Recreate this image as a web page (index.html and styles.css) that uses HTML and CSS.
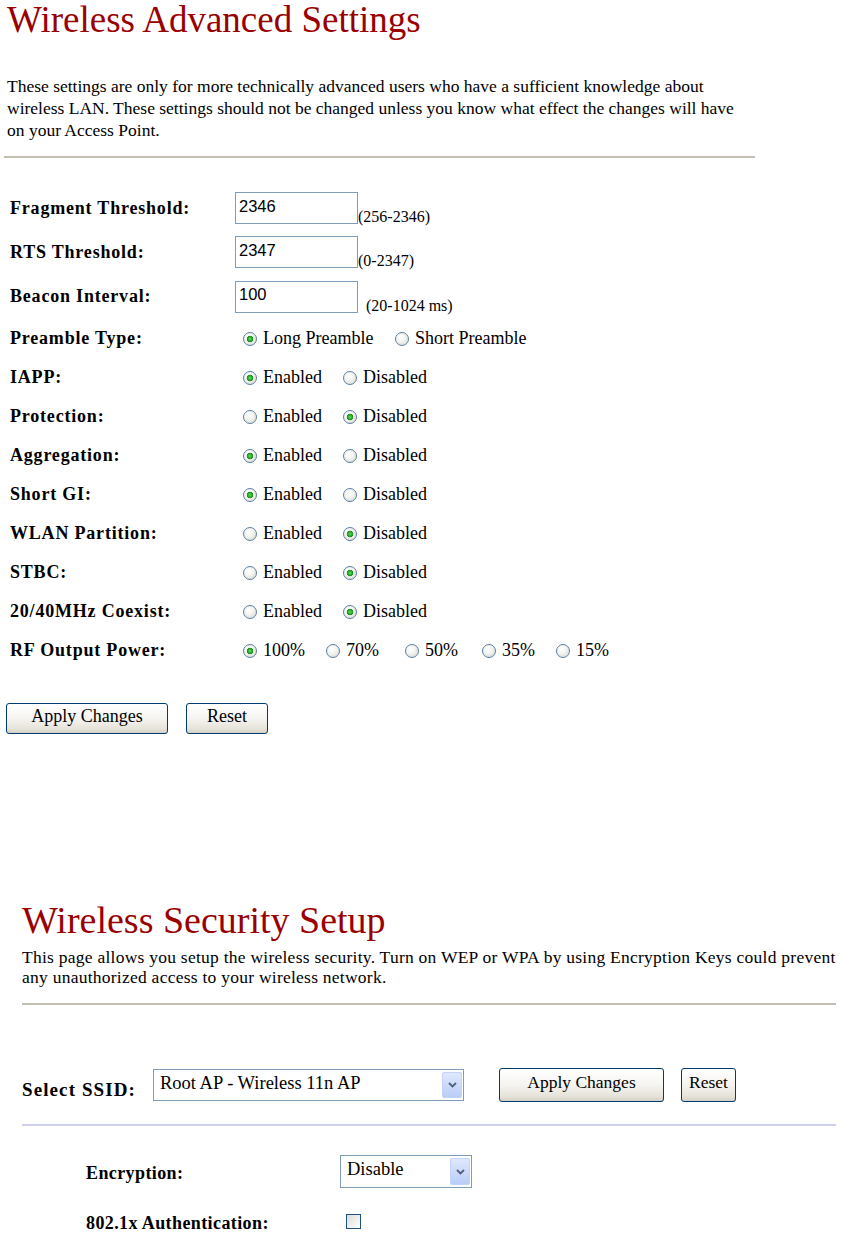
FILE: index.html
```html
<!DOCTYPE html>
<html>
<head>
<meta charset="utf-8">
<link rel="stylesheet" href="styles.css">
</head>
<body>
<div class="page">
  <section class="adv">
    <h1 class="title">Wireless Advanced Settings</h1>
    <p class="desc">These settings are only for more technically advanced users who have a sufficient knowledge about<br>wireless LAN. These settings should not be changed unless you know what effect the changes will have<br>on your Access Point.</p>
    <hr class="rule rule-adv">
    <div class="form">
      <div class="row row-tall">
        <div class="label">Fragment Threshold:</div>
        <div class="field"><input class="textbox" type="text" value="2346"><span class="hint">(256-2346)</span></div>
      </div>
      <div class="row row-tall">
        <div class="label">RTS Threshold:</div>
        <div class="field"><input class="textbox" type="text" value="2347"><span class="hint">(0-2347)</span></div>
      </div>
      <div class="row row-tall row-tall3">
        <div class="label">Beacon Interval:</div>
        <div class="field"><input class="textbox" type="text" value="100"><span class="hint hint-gap">(20-1024 ms)</span></div>
      </div>
      <div class="row">
        <div class="label">Preamble Type:</div>
        <div class="field">
          <label class="opt opt-long"><input class="radio" type="radio" name="pre" checked><span>Long Preamble</span></label>
          <label class="opt"><input class="radio" type="radio" name="pre"><span>Short Preamble</span></label>
        </div>
      </div>
      <div class="row">
        <div class="label">IAPP:</div>
        <div class="field">
          <label class="opt opt-en"><input class="radio" type="radio" name="iapp" checked><span>Enabled</span></label>
          <label class="opt"><input class="radio" type="radio" name="iapp"><span>Disabled</span></label>
        </div>
      </div>
      <div class="row">
        <div class="label">Protection:</div>
        <div class="field">
          <label class="opt opt-en"><input class="radio" type="radio" name="prot"><span>Enabled</span></label>
          <label class="opt"><input class="radio" type="radio" name="prot" checked><span>Disabled</span></label>
        </div>
      </div>
      <div class="row">
        <div class="label">Aggregation:</div>
        <div class="field">
          <label class="opt opt-en"><input class="radio" type="radio" name="agg" checked><span>Enabled</span></label>
          <label class="opt"><input class="radio" type="radio" name="agg"><span>Disabled</span></label>
        </div>
      </div>
      <div class="row">
        <div class="label">Short GI:</div>
        <div class="field">
          <label class="opt opt-en"><input class="radio" type="radio" name="sgi" checked><span>Enabled</span></label>
          <label class="opt"><input class="radio" type="radio" name="sgi"><span>Disabled</span></label>
        </div>
      </div>
      <div class="row">
        <div class="label">WLAN Partition:</div>
        <div class="field">
          <label class="opt opt-en"><input class="radio" type="radio" name="wp"><span>Enabled</span></label>
          <label class="opt"><input class="radio" type="radio" name="wp" checked><span>Disabled</span></label>
        </div>
      </div>
      <div class="row">
        <div class="label">STBC:</div>
        <div class="field">
          <label class="opt opt-en"><input class="radio" type="radio" name="stbc"><span>Enabled</span></label>
          <label class="opt"><input class="radio" type="radio" name="stbc" checked><span>Disabled</span></label>
        </div>
      </div>
      <div class="row">
        <div class="label">20/40MHz Coexist:</div>
        <div class="field">
          <label class="opt opt-en"><input class="radio" type="radio" name="co"><span>Enabled</span></label>
          <label class="opt"><input class="radio" type="radio" name="co" checked><span>Disabled</span></label>
        </div>
      </div>
      <div class="row">
        <div class="label">RF Output Power:</div>
        <div class="field">
          <label class="opt opt-pw1"><input class="radio" type="radio" name="rf" checked><span>100%</span></label>
          <label class="opt opt-pw2"><input class="radio" type="radio" name="rf"><span>70%</span></label>
          <label class="opt opt-pw3"><input class="radio" type="radio" name="rf"><span>50%</span></label>
          <label class="opt opt-pw4"><input class="radio" type="radio" name="rf"><span>35%</span></label>
          <label class="opt"><input class="radio" type="radio" name="rf"><span>15%</span></label>
        </div>
      </div>
    </div>
    <div class="actions">
      <button class="btn btn-apply" type="button">Apply Changes</button>
      <button class="btn btn-reset" type="button">Reset</button>
    </div>
  </section>

  <section class="sec">
    <h1 class="title title-sec">Wireless Security Setup</h1>
    <p class="desc desc-sec">This page allows you setup the wireless security. Turn on WEP or WPA by using Encryption Keys could prevent<br>any unauthorized access to your wireless network.</p>
    <hr class="rule rule-sec">
    <div class="ssid-row">
      <span class="label label-ssid">Select SSID:</span>
      <div class="select select-ssid"><span class="select-text">Root AP - Wireless 11n AP</span><span class="select-arrow"><svg width="9" height="6" viewBox="0 0 9 6"><path d="M1 1 L4.5 4.5 L8 1" fill="none" stroke="#4d6185" stroke-width="1.8"/></svg></span></div>
      <button class="btn btn-apply2" type="button">Apply Changes</button>
      <button class="btn btn-reset2" type="button">Reset</button>
    </div>
    <hr class="rule rule-blue">
    <div class="enc">
      <div class="enc-row">
        <span class="label label-enc">Encryption:</span>
        <div class="select select-enc"><span class="select-text">Disable</span><span class="select-arrow"><svg width="9" height="6" viewBox="0 0 9 6"><path d="M1 1 L4.5 4.5 L8 1" fill="none" stroke="#4d6185" stroke-width="1.8"/></svg></span></div>
      </div>
      <div class="enc-row enc-row2">
        <span class="label label-enc">802.1x Authentication:</span>
        <input class="check" type="checkbox">
      </div>
    </div>
  </section>
</div>
</body>
</html>
```
FILE: styles.css
```css
html, body {
  margin: 0;
  padding: 0;
  background: #ffffff;
}
body {
  font-family: "Liberation Serif", "Times New Roman", serif;
  color: #000000;
  width: 844px;
  height: 1243px;
  overflow: hidden;
}
.page {
  display: flex;
  flex-direction: column;
}
.adv {
  padding-left: 7px;
}
.title {
  margin: 2px 0 0 0;
  font-family: "Liberation Serif", serif;
  font-weight: normal;
  font-size: 37px;
  line-height: 36px;
  color: #990000;
}
.desc {
  margin: 37px 0 0 0;
  font-size: 17.5px;
  line-height: 22px;
}
.rule {
  border: 0;
  margin: 0;
  height: 2px;
  background: #c3c0b3;
}
.rule-adv {
  margin-top: 15px;
  margin-left: -3px;
  width: 751px;
}
.form {
  margin-top: 28px;
  display: flex;
  flex-direction: column;
  padding-left: 3px;
}
.row {
  display: flex;
  align-items: center;
  height: 39px;
}
.row-tall {
  height: 44px;
}
.row-tall3 {
  height: 45px;
}
.label {
  width: 225px;
  flex: none;
  font-weight: bold;
  font-size: 18px;
  letter-spacing: 0.8px;
}
.field {
  display: flex;
  align-items: center;
}
.textbox {
  box-sizing: border-box;
  width: 123px;
  height: 32px;
  border: 1px solid #7f9db9;
  margin: 0;
  padding: 0 0 4px 3px;
  font-family: "Liberation Sans", Arial, sans-serif;
  font-size: 16.5px;
  color: #000;
  background: #fff;
}
.hint {
  font-size: 16px;
  align-self: flex-end;
  margin-bottom: -2px;
}
.hint-gap {
  margin-left: 8px;
}
.opt {
  display: flex;
  align-items: center;
  font-size: 18px;
  margin-left: 8px;
}
.opt span {
  margin-left: 6px;
}
.opt-long {
  width: 144px;
}
.opt-en {
  width: 92px;
}
.opt-pw1 {
  width: 75px;
}
.opt-pw2 {
  width: 71px;
}
.opt-pw3 {
  width: 69px;
}
.opt-pw4 {
  width: 66px;
}
.radio {
  appearance: none;
  -webkit-appearance: none;
  box-sizing: border-box;
  width: 14px;
  height: 14px;
  margin: 0;
  border: 1px solid #5b7fa6;
  border-radius: 50%;
  background: radial-gradient(circle at 40% 35%, #ffffff 0, #f4f4f0 40%, #d4d4cc 100%);
}
.radio:checked {
  background:
    radial-gradient(circle, #5fe05f 0, #2caa2c 2px, #1f8a1f 3px, rgba(0,0,0,0) 3.6px),
    radial-gradient(circle at 40% 35%, #ffffff 0, #f4f4f0 40%, #d4d4cc 100%);
}
.actions {
  display: flex;
  gap: 18px;
  margin-top: 33px;
  margin-left: -1px;
}
.btn {
  box-sizing: border-box;
  height: 31px;
  border: 1px solid #003c74;
  border-radius: 3px;
  background: linear-gradient(#ffffff 0, #f5f4f0 50%, #e6e3da 85%, #d6d0c5 100%);
  font-family: "Liberation Serif", serif;
  font-size: 18px;
  color: #000;
  padding: 0 0 4px 0;
  margin: 0;
}
.btn-apply {
  width: 162px;
}
.btn-reset {
  width: 82px;
}
.sec {
  margin-top: 165px;
  padding-left: 22px;
  width: 814px;
}
.title-sec {
  font-size: 38px;
  line-height: 38px;
}
.desc-sec {
  margin-top: 8px;
  font-size: 17.5px;
  line-height: 20px;
  letter-spacing: 0.25px;
}
.rule-sec {
  margin-top: 16px;
  width: 814px;
}
.ssid-row {
  display: flex;
  align-items: center;
  height: 32px;
  margin-top: 64px;
}
.label-ssid {
  width: auto;
  font-size: 19px;
  letter-spacing: 1.1px;
  margin-right: 17px;
  padding-top: 10px;
}
.select {
  box-sizing: border-box;
  display: flex;
  align-items: stretch;
  border: 1px solid #7f9db9;
  background: #fff;
  padding: 2px 1px 2px 1px;
  height: 32px;
}
.select-text {
  flex: 1;
  font-size: 18.5px;
  line-height: 20px;
  padding: 1px 0 0 5px;
}
.select-arrow {
  width: 18px;
  display: flex;
  align-items: center;
  justify-content: center;
  border: 1px solid #c3d3fd;
  border-radius: 2px;
  background: linear-gradient(#dfe8fd, #b9cdf7);
}
.select-ssid {
  width: 311px;
}
.btn-apply2 {
  width: 165px;
  height: 34px;
  margin-left: 35px;
  font-size: 17.5px;
  padding-bottom: 6px;
}
.btn-reset2 {
  width: 55px;
  height: 34px;
  margin-left: 17px;
  font-size: 17.5px;
  padding-bottom: 6px;
}
.rule-blue {
  margin-top: 23px;
  width: 814px;
  height: 2px;
  background: #cfcfee;
}
.enc {
  padding-left: 64px;
  display: flex;
  flex-direction: column;
}
.enc-row {
  display: flex;
  align-items: center;
  height: 33px;
  margin-top: 29px;
}
.enc-row2 {
  margin-top: 17px;
}
.label-enc {
  width: 254px;
  font-size: 18px;
  letter-spacing: 0.4px;
  padding-top: 3px;
}
.select-enc {
  width: 132px;
  height: 33px;
}
.check {
  appearance: none;
  -webkit-appearance: none;
  box-sizing: border-box;
  width: 15px;
  height: 15px;
  margin: 0 0 0 6px;
  border: 1px solid #1c5180;
  background: linear-gradient(135deg, #dcdcd7, #ffffff);
}
```
